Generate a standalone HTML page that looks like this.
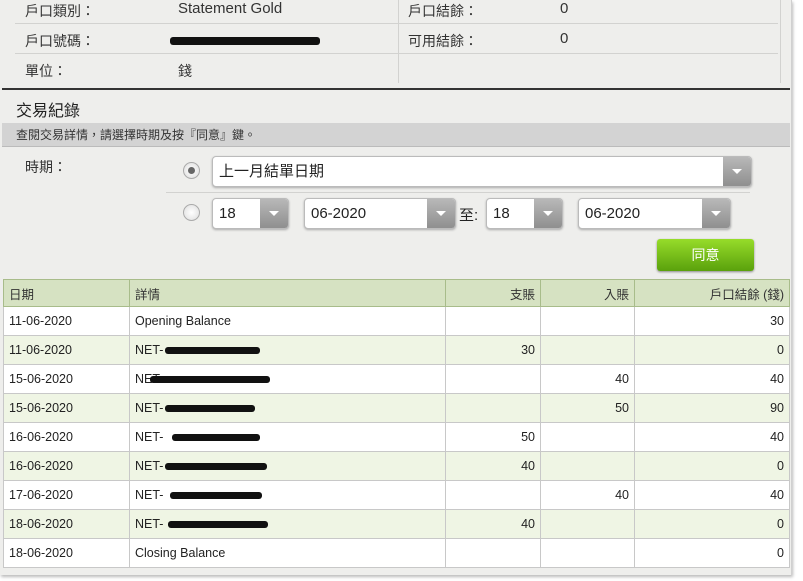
<!DOCTYPE html>
<html><head><meta charset="utf-8"><style>
*{margin:0;padding:0;box-sizing:border-box}
body{width:803px;height:581px;background:#fff;font-family:"Liberation Sans","Noto Sans CJK TC",sans-serif;font-size:13px;color:#222;position:relative;overflow:hidden}
#pg{position:absolute;left:0;top:0;width:792px;height:575px;background:#eeeeec;border-right:1px solid #d0d0d0;box-shadow:1px 2px 3px #bbb}
.a{position:absolute}
.ln{position:absolute;height:1px;background:#d2d2d0}
.lab{font-size:14px;color:#333}
.sel{position:absolute;background:#fff;border:1px solid #bbb;border-radius:4px;height:31px;box-shadow:0 1px 2px #aaa;font-size:15px;line-height:29px;padding-left:6px;overflow:hidden}
.sel .ar{position:absolute;right:0;top:0;width:28px;height:100%;background:linear-gradient(#b8b8b8,#8f8f8f)}
.sel .ar:after{content:"";position:absolute;left:9px;top:12px;border-left:5px solid transparent;border-right:5px solid transparent;border-top:5px solid #fff}
.rad{position:absolute;width:17px;height:17px;border-radius:50%;border:1px solid #aaa;background:radial-gradient(#fff,#ddd)}
table{position:absolute;left:3px;top:279px;width:787px;border-collapse:collapse;font-size:12.5px}
td,th{border:1px solid #c8c8c8;height:29px;padding:0 5px;font-weight:normal;text-align:left}
th{background:#d6e2c2;border-color:#a8bc8a;height:27px;color:#333}
tr:nth-child(odd) td{background:#eff5e4}
tr:nth-child(even) td{background:#fff}
.r{text-align:right}
.blk{position:absolute;background:#111;border-radius:3px;height:7px}
</style></head><body>
<div id="pg">
<div class="a lab" style="left:25px;top:1px">戶口類別：</div>
<div class="a lab" style="left:178px;top:0px;font-size:15px">Statement Gold</div>
<div class="a lab" style="left:25px;top:31px">戶口號碼：</div>
<div class="blk" style="left:170px;top:37px;width:150px;height:8px"></div>
<div class="a lab" style="left:25px;top:61px">單位：</div>
<div class="a lab" style="left:178px;top:61px">錢</div>
<div class="a lab" style="left:408px;top:1px">戶口結餘：</div>
<div class="a lab" style="left:560px;top:0px;font-size:15px">0</div>
<div class="a lab" style="left:408px;top:31px">可用結餘：</div>
<div class="a lab" style="left:560px;top:30px;font-size:15px">0</div>
<div class="ln" style="left:15px;top:23px;width:383px"></div>
<div class="ln" style="left:15px;top:53px;width:383px"></div>
<div class="ln" style="left:398px;top:23px;width:380px"></div>
<div class="ln" style="left:398px;top:53px;width:380px"></div>
<div class="a" style="left:398px;top:0;width:1px;height:83px;background:#d2d2d0"></div>
<div class="a" style="left:780px;top:0;width:1px;height:83px;background:#d2d2d0"></div>
<div class="a" style="left:2px;top:88px;width:788px;height:2px;background:#333"></div>
<div class="a" style="left:16px;top:97px;font-size:16px;color:#222">交易紀錄</div>
<div class="a" style="left:2px;top:123px;width:788px;height:24px;background:#d3d3d3;border-bottom:1px solid #bbb;font-size:12px;line-height:24px;padding-left:14px;color:#333">查閱交易詳情，請選擇時期及按『同意』鍵。</div>
<div class="a lab" style="left:25px;top:157px">時期：</div>
<div class="rad" style="left:183px;top:162px"><div style="position:absolute;left:4px;top:4px;width:7px;height:7px;border-radius:50%;background:#666"></div></div>
<div class="sel" style="left:212px;top:156px;width:540px">上一月結單日期<div class="ar"></div></div>
<div class="ln" style="left:166px;top:192px;width:584px"></div>
<div class="rad" style="left:183px;top:204px"></div>
<div class="sel" style="left:212px;top:198px;width:77px">18<div class="ar"></div></div>
<div class="sel" style="left:304px;top:198px;width:152px">06-2020<div class="ar"></div></div>
<div class="a" style="left:459px;top:204px;font-size:15px">至:</div>
<div class="sel" style="left:486px;top:198px;width:77px">18<div class="ar"></div></div>
<div class="sel" style="left:578px;top:198px;width:153px">06-2020<div class="ar"></div></div>
<div class="a" style="left:657px;top:239px;width:97px;height:32px;border-radius:3px;background:linear-gradient(#97dc2a,#5aa10c);box-shadow:0 1px 2px #888;color:#fff;font-size:14px;text-align:center;line-height:32px">同意</div>
<table>
<tr><th style="width:126px">日期</th><th style="width:316px">詳情</th><th class="r" style="width:95px">支賬</th><th class="r" style="width:94px">入賬</th><th class="r">戶口結餘 (錢)</th></tr>
<tr><td>11-06-2020</td><td>Opening Balance</td><td></td><td></td><td class="r">30</td></tr>
<tr><td>11-06-2020</td><td>NET-</td><td class="r">30</td><td></td><td class="r">0</td></tr>
<tr><td>15-06-2020</td><td>NET-</td><td></td><td class="r">40</td><td class="r">40</td></tr>
<tr><td>15-06-2020</td><td>NET-</td><td></td><td class="r">50</td><td class="r">90</td></tr>
<tr><td>16-06-2020</td><td>NET-</td><td class="r">50</td><td></td><td class="r">40</td></tr>
<tr><td>16-06-2020</td><td>NET-</td><td class="r">40</td><td></td><td class="r">0</td></tr>
<tr><td>17-06-2020</td><td>NET-</td><td></td><td class="r">40</td><td class="r">40</td></tr>
<tr><td>18-06-2020</td><td>NET-</td><td class="r">40</td><td></td><td class="r">0</td></tr>
<tr><td>18-06-2020</td><td>Closing Balance</td><td></td><td></td><td class="r">0</td></tr>
</table>
<div class="blk" style="left:165px;top:347px;width:95px"></div>
<div class="blk" style="left:150px;top:376px;width:120px"></div>
<div class="blk" style="left:165px;top:405px;width:90px"></div>
<div class="blk" style="left:172px;top:434px;width:88px"></div>
<div class="blk" style="left:165px;top:463px;width:102px"></div>
<div class="blk" style="left:170px;top:492px;width:92px"></div>
<div class="blk" style="left:168px;top:521px;width:100px"></div>
</div>
</body></html>
